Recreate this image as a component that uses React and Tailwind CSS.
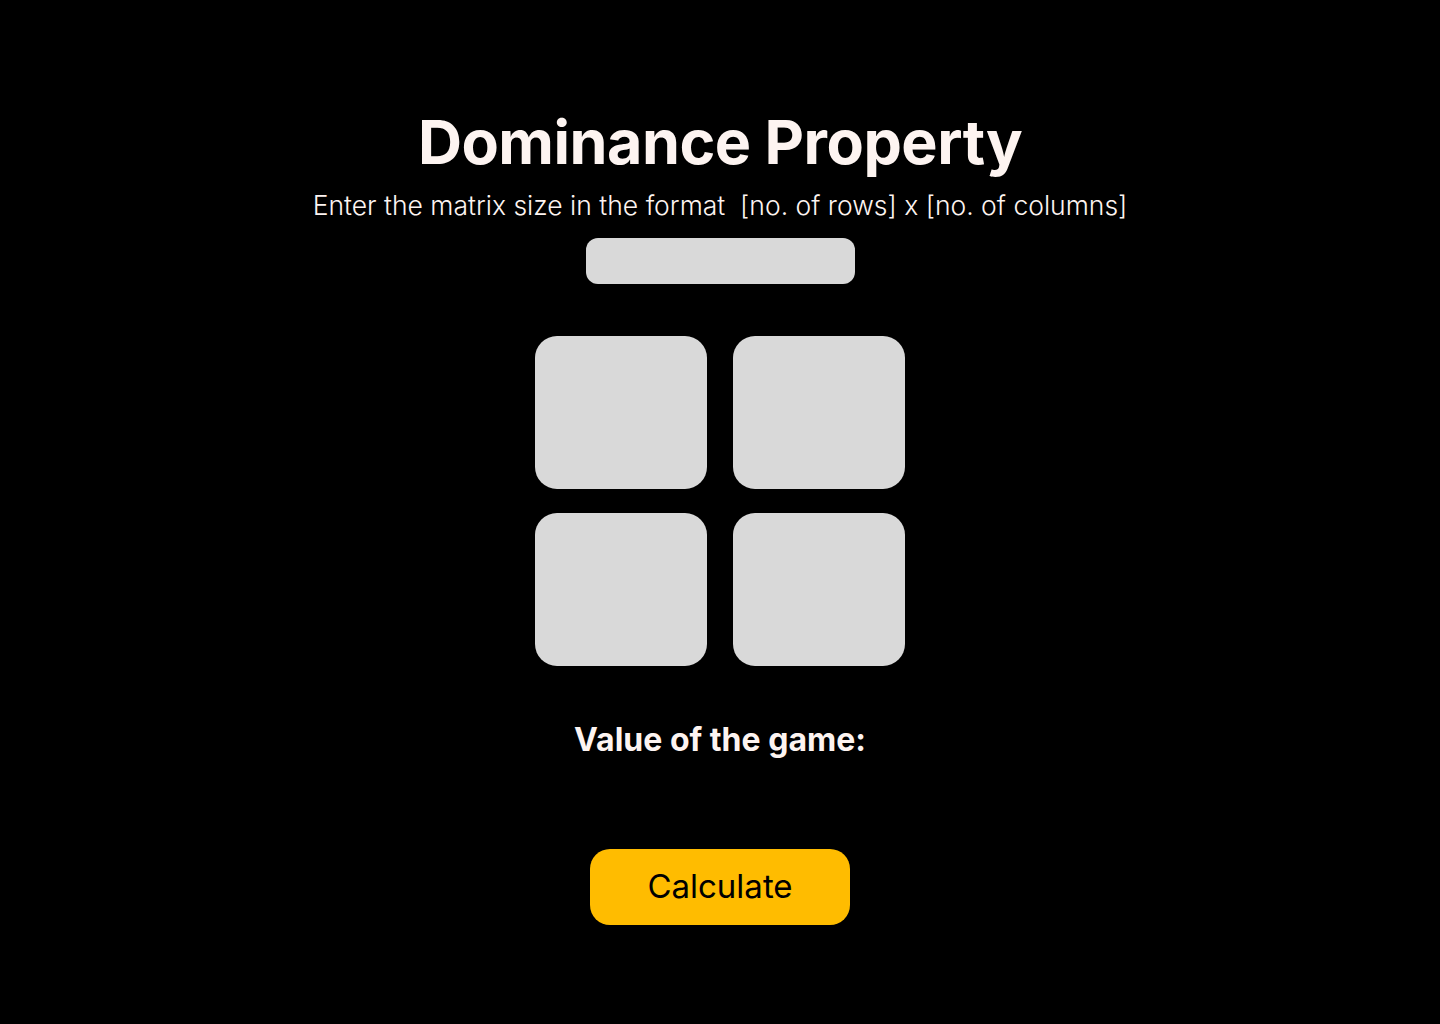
export default function App() {
  return (
    <div className="min-h-screen w-full bg-black flex flex-col items-center pt-[104px] font-['Inter',sans-serif]">
      <h1 className="text-[61px] leading-[76px] font-bold text-[#fdf4f1] tracking-[-0.5px]">Dominance Property</h1>
      <p className="mt-[7px] text-[26.5px] leading-[36px] font-light text-[#fdf4f1]">
        Enter the matrix size in the format&nbsp; [no. of rows] x [no. of columns]
      </p>
      <input className="mt-[15px] w-[269px] h-[46px] rounded-[12px] bg-[#d9d9d9] outline-none px-4 text-black" />
      <div className="mt-[52px] grid grid-cols-[172px_172px] gap-x-[26px] gap-y-[24px]">
        <div className="h-[153px] rounded-[22px] bg-[#d9d9d9]" />
        <div className="h-[153px] rounded-[22px] bg-[#d9d9d9]" />
        <div className="h-[153px] rounded-[22px] bg-[#d9d9d9]" />
        <div className="h-[153px] rounded-[22px] bg-[#d9d9d9]" />
      </div>
      <p className="mt-[54px] text-[32px] leading-[40px] font-bold text-[#fdf4f1]">Value of the game:</p>
      <button className="mt-[89px] w-[260px] h-[76px] rounded-[20px] bg-[#ffbc00] text-[33px] text-black">
        Calculate
      </button>
    </div>
  )
}
